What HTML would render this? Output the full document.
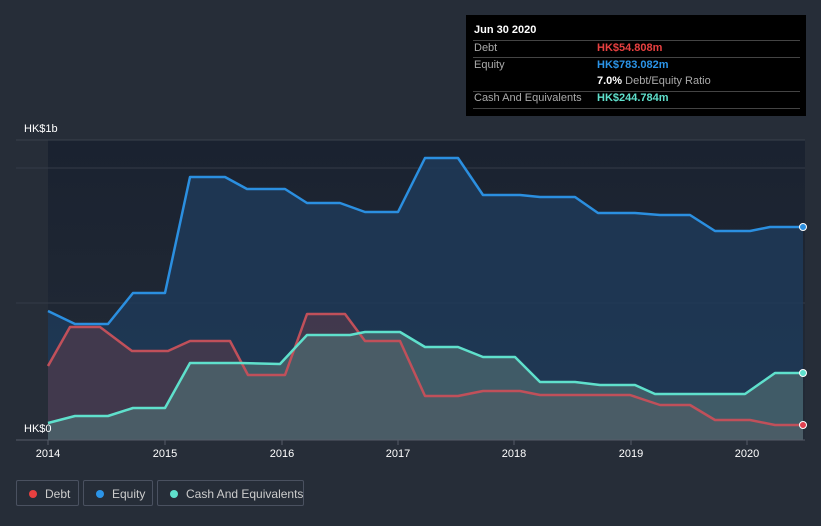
<!DOCTYPE html><html><head><style>
html,body{margin:0;width:821px;height:526px;overflow:hidden}
body{background:#262d38;font-family:"Liberation Sans",sans-serif;position:relative}
.t{position:absolute;background:#000;left:466px;top:15px;width:340px;height:101px;color:#fff;font-size:11px}
.r{position:absolute;left:7px;width:327px;border-top:1px solid #444}
.l{position:absolute;left:8px;color:#aaa}.v{position:absolute;left:131px;font-weight:bold}
.lg{position:absolute;top:480px;height:26px;border:1px solid #4a5160;border-radius:2px;color:#ccc;font-size:12px;line-height:26px;box-sizing:border-box;white-space:nowrap}
.lg i{position:absolute;left:12px;top:9px;width:8px;height:8px;border-radius:50%}
.lg span{position:absolute;left:28px}
</style></head><body>
<svg width="821" height="526" style="position:absolute;left:0;top:0">
<defs><linearGradient id="g" x1="0" y1="0" x2="0" y2="1"><stop offset="0" stop-color="#1a2230"/><stop offset="1" stop-color="#232b37"/></linearGradient></defs>
<rect x="48" y="140" width="757" height="300" fill="url(#g)"/>
<line x1="16" y1="140" x2="805" y2="140" stroke="#3a414d"/>
<line x1="16" y1="168" x2="805" y2="168" stroke="#343b47"/>
<line x1="16" y1="303" x2="805" y2="303" stroke="#343b47"/>
<polygon fill="#1e3a58" opacity="0.85" points="48,311 75,324 108,324 133,293 165,293 190,177 225,177 247,189 285,189 307,203 340,203 365,212 398,212 425,158 458,158 483,195 520,195 540,197 575,197 598,213 635,213 660,215 690,215 715,231 750,231 770,227 803,227 803,440 48,440"/>
<polygon fill="#4a3a4c" opacity="0.8" points="48,366 70,327 100,327 132,351 168,351 190,341 230,341 248,375 285,375 307,314 345,314 365,341 400,341 425,396 458,396 483,391 520,391 540,395 630,395 660,405 690,405 715,420 750,420 775,425 803,425 803,440 48,440"/>
<polygon fill="#4f6b70" opacity="0.7" points="48,423 75,416 108,416 133,408 165,408 190,363 240,363 280,364 307,335 350,335 365,332 400,332 425,347 458,347 483,357 515,357 540,382 575,382 600,385 635,385 655,394 745,394 775,373 803,373 803,440 48,440"/>
<g fill="none" stroke-width="2.5" stroke-linejoin="round">
<polyline stroke="#2b8fe0" points="48,311 75,324 108,324 133,293 165,293 190,177 225,177 247,189 285,189 307,203 340,203 365,212 398,212 425,158 458,158 483,195 520,195 540,197 575,197 598,213 635,213 660,215 690,215 715,231 750,231 770,227 803,227"/>
<polyline stroke="#c0505a" points="48,366 70,327 100,327 132,351 168,351 190,341 230,341 248,375 285,375 307,314 345,314 365,341 400,341 425,396 458,396 483,391 520,391 540,395 630,395 660,405 690,405 715,420 750,420 775,425 803,425"/>
<polyline stroke="#5fe0cc" points="48,423 75,416 108,416 133,408 165,408 190,363 240,363 280,364 307,335 350,335 365,332 400,332 425,347 458,347 483,357 515,357 540,382 575,382 600,385 635,385 655,394 745,394 775,373 803,373"/>
</g>
<line x1="16" y1="440" x2="805" y2="440" stroke="#555c68"/>
<g stroke="#555c68"><line x1="48" y1="440" x2="48" y2="445"/><line x1="165" y1="440" x2="165" y2="445"/><line x1="282" y1="440" x2="282" y2="445"/><line x1="398" y1="440" x2="398" y2="445"/><line x1="514" y1="440" x2="514" y2="445"/><line x1="631" y1="440" x2="631" y2="445"/><line x1="747" y1="440" x2="747" y2="445"/></g>
<circle cx="803" cy="227" r="3.5" fill="#2b8fe0" stroke="#fff"/>
<circle cx="803" cy="373" r="3.5" fill="#5fe0cc" stroke="#fff"/>
<circle cx="803" cy="425" r="3.5" fill="#e04050" stroke="#fff"/>
<g fill="#fff" font-size="11" font-family="Liberation Sans" text-anchor="middle">
<text x="48" y="457">2014</text><text x="165" y="457">2015</text><text x="282" y="457">2016</text><text x="398" y="457">2017</text><text x="514" y="457">2018</text><text x="631" y="457">2019</text><text x="747" y="457">2020</text>
<text x="24" y="132" text-anchor="start">HK$1b</text><text x="24" y="432" text-anchor="start">HK$0</text></g>
</svg>
<div class="t">
<div style="position:absolute;left:8px;top:9px;font-weight:bold">Jun 30 2020</div>
<div class="r" style="top:25px"></div>
<div class="l" style="top:27px">Debt</div><div class="v" style="top:27px;color:#e84040">HK$54.808m</div>
<div class="r" style="top:42px"></div>
<div class="l" style="top:44px">Equity</div><div class="v" style="top:44px;color:#2b94e8">HK$783.082m</div>
<div class="v" style="top:60px">7.0% <span style="color:#aaa;font-weight:normal">Debt/Equity Ratio</span></div>
<div class="r" style="top:76px"></div>
<div class="l" style="top:77px">Cash And Equivalents</div><div class="v" style="top:77px;color:#5fe0cc">HK$244.784m</div>
<div class="r" style="top:93px"></div>
</div>
<div class="lg" style="left:16px;width:63px"><i style="background:#e84040"></i><span>Debt</span></div>
<div class="lg" style="left:83px;width:70px"><i style="background:#2b94e8"></i><span>Equity</span></div>
<div class="lg" style="left:157px;width:147px"><i style="background:#5fe0cc"></i><span>Cash And Equivalents</span></div>
</body></html>
